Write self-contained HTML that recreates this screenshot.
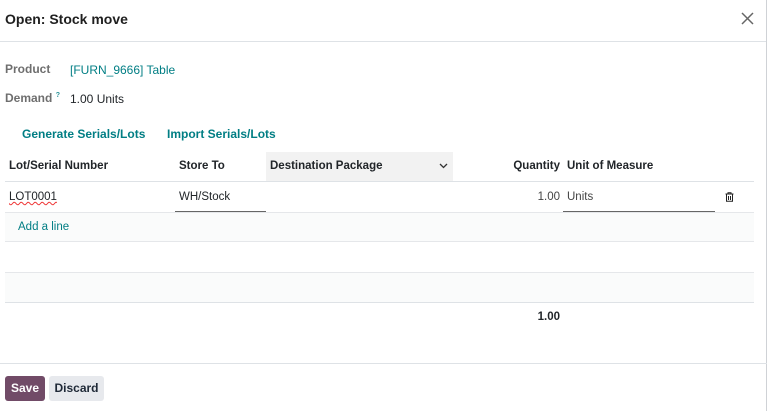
<!DOCTYPE html>
<html><head><style>
*{box-sizing:border-box;margin:0;padding:0}
body{width:768px;height:411px;overflow:hidden;background:#fff;font-family:"Liberation Sans",sans-serif;font-size:11.5px;color:#212529;position:relative}
.a{position:absolute;white-space:nowrap}
.hl{position:absolute;height:1px;background:#dee2e6}
.t{color:#017e84}
</style></head><body>
<div class="a" style="left:5px;top:11px;font-size:14px;font-weight:bold;color:#1f1f1f">Open: Stock move</div>
<svg class="a" style="left:741px;top:12px" width="13" height="13" viewBox="0 0 13 13"><path d="M1 1L12 12M12 1L1 12" stroke="#666" stroke-width="1.5"/></svg>
<div class="hl" style="left:0;top:41px;width:767px"></div>
<div style="position:absolute;left:766px;top:0;width:1px;height:411px;background:#cfd2d6"></div>

<div class="a" style="left:5px;top:62px;color:#555;font-weight:bold;font-size:12px;opacity:.85">Product</div>
<div class="a t" style="left:70px;top:63px;font-size:12px">[FURN_9666] Table</div>
<div class="a" style="left:5px;top:91px;color:#555;font-weight:bold;font-size:12px;opacity:.85">Demand <sup style="font-size:7px;color:#017e84">?</sup></div>
<div class="a" style="left:70px;top:92px;font-size:12px">1.00 Units</div>

<div class="a t" style="left:22px;top:127px;font-weight:bold;font-size:12px">Generate Serials/Lots</div>
<div class="a t" style="left:167px;top:127px;font-weight:bold;font-size:12px">Import Serials/Lots</div>

<div style="position:absolute;left:266px;top:152px;width:187px;height:29px;background:#f2f2f2"></div>
<div class="a" style="left:9px;top:160px;font-weight:bold">Lot/Serial Number</div>
<div class="a" style="left:179px;top:160px;font-weight:bold">Store To</div>
<div class="a" style="left:270px;top:160px;font-weight:bold">Destination Package</div>
<svg class="a" style="left:439px;top:163px" width="9" height="6" viewBox="0 0 9 6"><path d="M1 1L4.5 4.5L8 1" stroke="#333" stroke-width="1.3" fill="none"/></svg>
<div class="a" style="left:500px;top:160px;width:60px;text-align:right;font-weight:bold">Quantity</div>
<div class="a" style="left:567px;top:160px;font-weight:bold">Unit of Measure</div>
<div class="hl" style="left:5px;top:181px;width:749px"></div>

<div class="a" style="left:9px;top:191px;text-decoration:underline wavy #e33;text-decoration-thickness:1px">LOT0001</div>
<div class="a" style="left:179px;top:191px">WH/Stock</div>
<div style="position:absolute;left:175px;top:211px;width:91px;height:1px;background:#666"></div>
<div class="a" style="left:500px;top:191px;width:60px;text-align:right;color:#444">1.00</div>
<div class="a" style="left:567px;top:191px;color:#444">Units</div>
<div style="position:absolute;left:563px;top:211px;width:152px;height:1px;background:#666"></div>
<svg class="a" style="left:725px;top:192px" width="9" height="10" viewBox="0 0 9 10"><path d="M0.5 2H8.5M3 2V0.8H6V2M1.5 2.5V9.3H7.5V2.5M3.5 4V8M5.5 4V8" stroke="#222" stroke-width="1" fill="none"/></svg>
<div class="hl" style="left:5px;top:212px;width:749px;background:#e5e7ea"></div>

<div style="position:absolute;left:5px;top:213px;width:749px;height:29px;background:#fafbfb"></div>
<div class="a t" style="left:18px;top:221px">Add a line</div>
<div class="hl" style="left:5px;top:241px;width:749px;background:#e5e7ea"></div>
<div class="hl" style="left:5px;top:272px;width:749px;background:#e5e7ea"></div>
<div style="position:absolute;left:5px;top:273px;width:749px;height:29px;background:#fafbfb"></div>
<div class="hl" style="left:5px;top:302px;width:749px"></div>
<div class="a" style="left:500px;top:311px;width:60px;text-align:right;font-weight:bold">1.00</div>

<div class="hl" style="left:0;top:363px;width:767px"></div>
<div class="a" style="left:5px;top:376px;width:40px;height:25px;background:#714b67;border-radius:3px;color:#fff;font-weight:bold;font-size:12px;text-align:center;line-height:25px">Save</div>
<div class="a" style="left:49px;top:376px;width:55px;height:25px;background:#e7e9ed;border-radius:3px;color:#1f2937;font-weight:bold;font-size:12px;text-align:center;line-height:25px">Discard</div>
</body></html>
